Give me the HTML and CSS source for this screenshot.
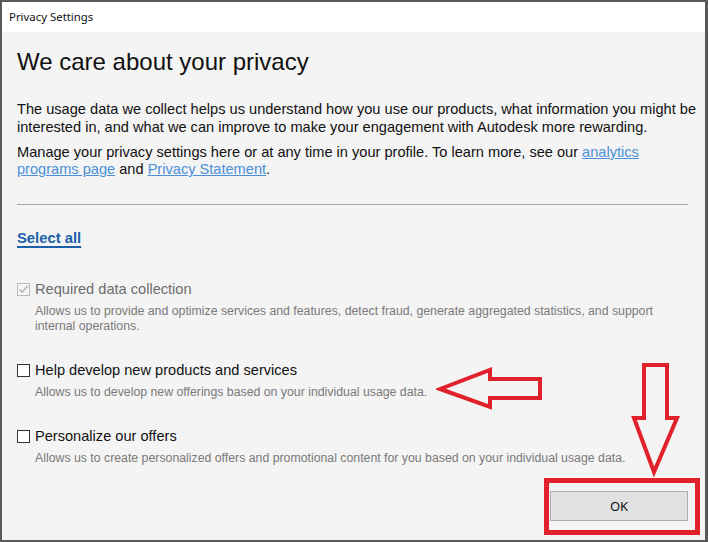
FILE: index.html
```html
<!DOCTYPE html>
<html>
<head>
	<meta charset="utf-8">
	<title>Privacy Settings</title>
	<link rel="stylesheet" href="styles.css">
</head>
<body>
	<div class="window">
		<div class="titlebar">Privacy Settings</div>
		<div class="content">
			<h1 class="heading">We care about your privacy</h1>
			<p class="intro">The usage data we collect helps us understand how you use our products, what information you might be interested in, and what we can improve to make your engagement with Autodesk more rewarding.</p>
			<p class="intro intro2">Manage your privacy settings here or at any time in your profile. To learn more, see our <a class="link" href="#">analytics</a> <a class="link" href="#">programs page</a> and <a class="link" href="#">Privacy Statement</a>.</p>
			<div class="rule"></div>
			<a class="select-all" href="#">Select all</a>

			<div class="option option-first disabled">
				<label class="option-label"><span class="box checked"><svg width="11" height="11" viewBox="0 0 11 11"><path d="M1.5 5.5 L4.2 8.2 L9.5 2" fill="none" stroke="#a8a8a8" stroke-width="1.2"/></svg></span>Required data collection</label>
				<p class="option-desc">Allows us to provide and optimize services and features, detect fraud, generate aggregated statistics, and support internal operations.</p>
			</div>
			<div class="option">
				<label class="option-label"><span class="box"></span>Help develop new products and services</label>
				<p class="option-desc">Allows us to develop new offerings based on your individual usage data.</p>
			</div>
			<div class="option">
				<label class="option-label"><span class="box"></span>Personalize our offers</label>
				<p class="option-desc">Allows us to create personalized offers and promotional content for you based on your individual usage data.</p>
			</div>
			<div class="footer">
				<button class="ok" type="button">OK</button>
			</div>
		</div>

		<!-- red marks drawn over the screenshot -->
		<svg class="mark mark-left" width="110" height="44" viewBox="0 0 110 44">
			<path d="M4 22 L54 3 L54 12 L104 12 L104 31 L54 31 L54 40 Z" fill="none" stroke="#e0202a" stroke-width="4" stroke-linejoin="miter"/>
		</svg>
		<svg class="mark mark-down" width="54" height="116" viewBox="0 0 54 116">
			<path d="M16 3 L39 3 L39 56 L49 56 L26 110 L6 56 L16 56 Z" fill="none" stroke="#e0202a" stroke-width="4" stroke-linejoin="miter"/>
		</svg>
		<div class="mark mark-box"></div>
	</div>
</body>
</html>
```

FILE: styles.css
```css
*
{
	margin: 0;
	padding: 0;
	box-sizing: border-box;
}
body
{
	width: 708px;
	height: 542px;
	overflow: hidden;
	font-family: "Liberation Sans", Arial, sans-serif;
}
.window
{
	position: relative;
	width: 708px;
	height: 542px;
	border: 2px solid #595959;
	border-right-width: 3px;
	background: #f4f4f4;
	display: flex;
	flex-direction: column;
}
.titlebar
{
	height: 30px;
	background: #fff;
	padding-left: 7px;
	font-family: "Noto Sans", "Open Sans", sans-serif;
	font-size: 11.4px;
	line-height: 30px;
	color: #111;
}
.content
{
	flex: 1;
	padding: 16px 6px 0 15px;
	color: #111;
	display: flex;
	flex-direction: column;
}
.heading
{
	font-weight: normal;
	font-size: 24px;
	line-height: 28px;
	color: #111;
}
.intro
{
	margin-top: 24px;
	font-size: 14.6px;
	line-height: 18px;
}
.intro2
{
	margin-top: 8px;
	line-height: 17px;
}
.link
{
	color: #4a90d9;
	text-decoration: underline;
}
.rule
{
	margin: 26px 11px 0 0;
	border-top: 1px solid #a6a6a6;
}
.select-all
{
	margin-top: 24px;
	align-self: flex-start;
	font-size: 14.8px;
	font-weight: bold;
	color: #1a5fa8;
	text-decoration: underline;
	text-decoration-thickness: 2px;
	text-underline-offset: 3px;
	line-height: 18px;
}
.option
{
	margin-top: 27px;
}
.option-first
{
	margin-top: 33px;
}
.option-label
{
	display: flex;
	align-items: center;
	gap: 5px;
	font-size: 14.6px;
	line-height: 18px;
	color: #111;
}
.box
{
	width: 13px;
	height: 13px;
	border: 1px solid #333;
	background: #fff;
	display: flex;
	align-items: center;
	justify-content: center;
}
.disabled .option-label
{
	color: #6d6d6d;
}
.disabled .box
{
	border-color: #bcbcbc;
	background: #f4f4f4;
}
.option-desc
{
	margin: 6px 0 0 18px;
	font-size: 12.3px;
	line-height: 15px;
	color: #7a7a7a;
	padding-right: 39px;
}
.footer
{
	margin-top: auto;
	padding: 0 11px 19px 0;
	display: flex;
	justify-content: flex-end;
}
.ok
{
	width: 138px;
	height: 30px;
	background: #e1e1e1;
	border: 1px solid #adadad;
	font-family: "Noto Sans", "Open Sans", sans-serif;
	font-size: 13px;
	color: #111;
}
.mark
{
	position: absolute;
}
.mark-left
{
	left: 434px;
	top: 365px;
}
.mark-down
{
	left: 626px;
	top: 360px;
}
.mark-box
{
	left: 542px;
	top: 476px;
	width: 156px;
	height: 57px;
	border: 5px solid #e0202a;
}
```
